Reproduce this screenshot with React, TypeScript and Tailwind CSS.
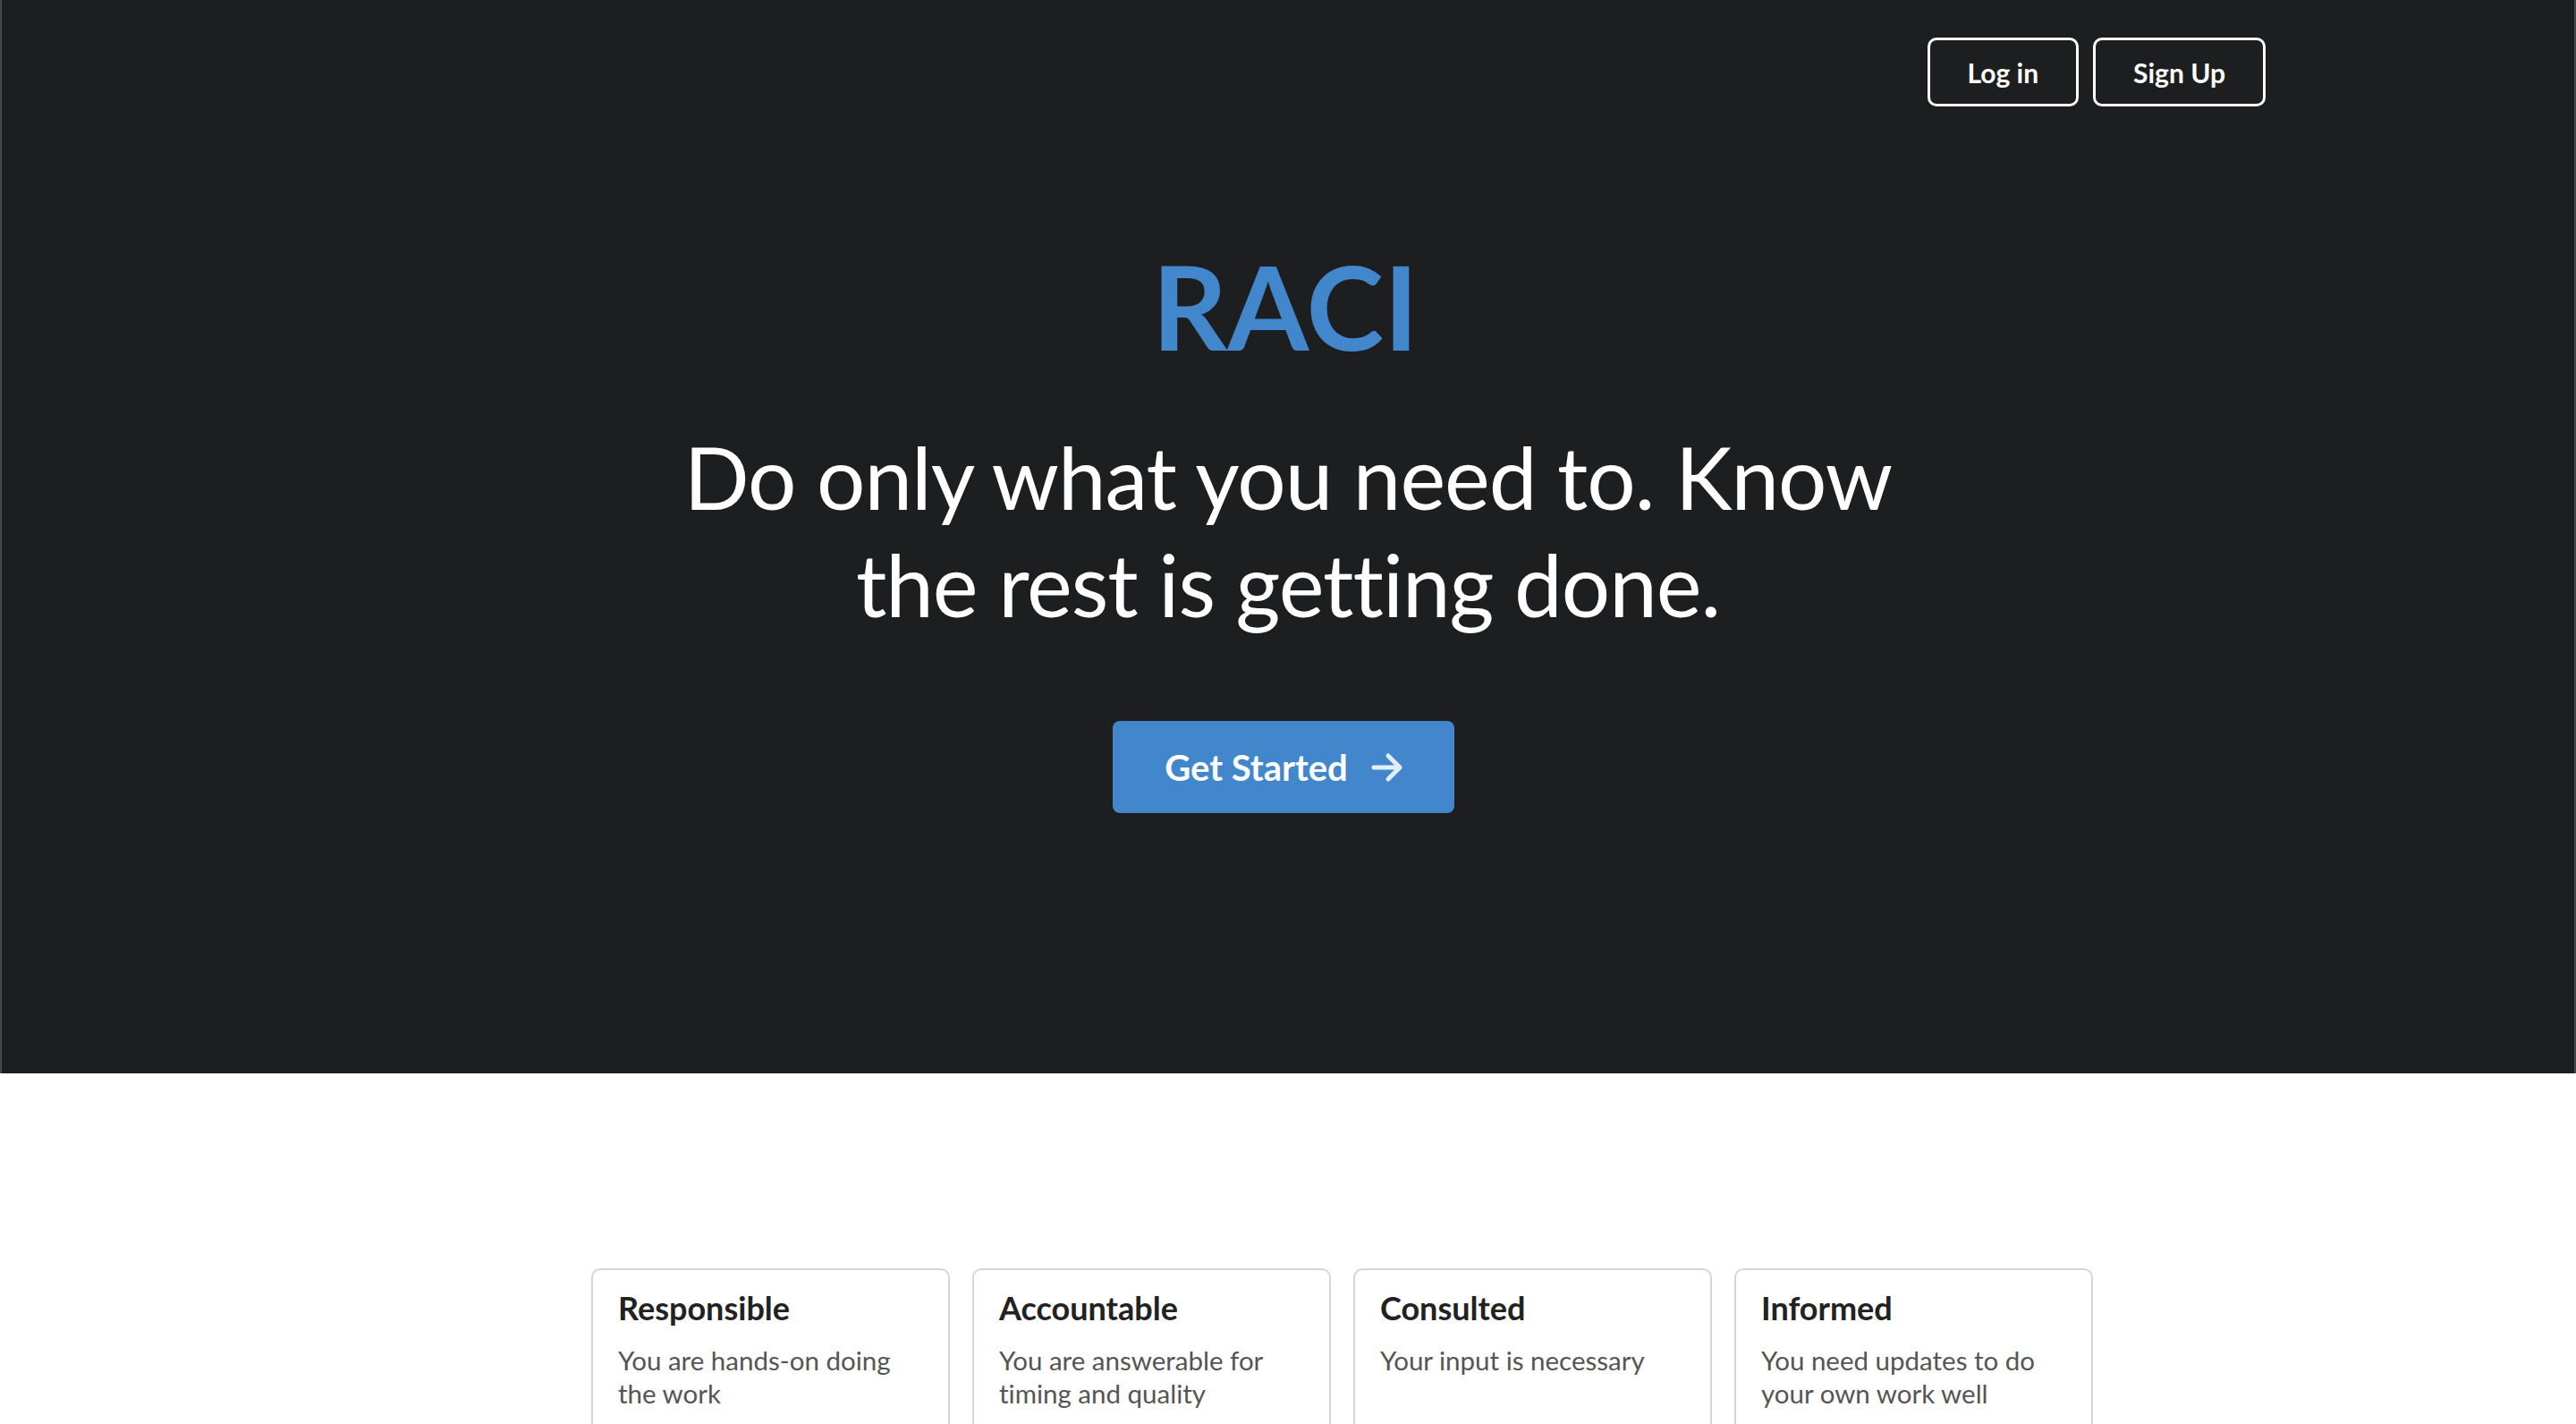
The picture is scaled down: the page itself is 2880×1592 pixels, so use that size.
import React from "react";

const cards = [
  { title: "Responsible", desc: ["You are hands-on doing", "the work"] },
  { title: "Accountable", desc: ["You are answerable for", "timing and quality"] },
  { title: "Consulted", desc: ["Your input is necessary"] },
  { title: "Informed", desc: ["You need updates to do", "your own work well"] },
];

export default function App() {
  return (
    <div className="min-h-[1592px] bg-white font-['Lato','Liberation_Sans',sans-serif] [font-variant-ligatures:none]">
      <section className="h-[1200px] bg-[#1d1e20] border-x-[2px] border-[#46474a] flex flex-col">
        <nav className="flex justify-end gap-[16px] pt-[42px] pr-[345px]">
          <button className="h-[77px] px-[42px] border-[3px] border-white rounded-[10px] text-white text-[30px] leading-[36px] font-bold">
            Log in
          </button>
          <button className="h-[77px] px-[42px] border-[3px] border-white rounded-[10px] text-white text-[30px] leading-[36px] font-bold">
            Sign Up
          </button>
        </nav>
        <div className="flex flex-col items-center pt-[157px]">
          <h1 className="text-[131px] leading-[131px] font-bold text-[#4287cb] mr-[6px]">RACI</h1>
          <p className="mt-[66px] text-center text-white text-[96px] leading-[120px] font-normal tracking-[-1px]">
            Do only what you need to. Know
            <br />
            the rest is getting done.
          </p>
          <button className="mt-[93px] mr-[11px] h-[103px] w-[382px] rounded-[8px] bg-[#4287cb] flex items-center justify-center gap-[26px] text-white text-[40px] leading-[48px] font-bold pl-[2px]">
            <span>Get Started</span>
            <svg width="36" height="34" viewBox="0 0 36 34" fill="none" className="text-white/85">
              <path d="M3 17H32M19 4L32 17L19 30" stroke="currentColor" strokeWidth="5" strokeLinecap="round" strokeLinejoin="round" />
            </svg>
          </button>
        </div>
      </section>
      <section className="pt-[218px] pl-[661px] flex gap-[25px]">
        {cards.map((c) => (
          <div
            key={c.title}
            className="w-[401px] h-[300px] border-2 border-[#d6d6d6] rounded-[10px] px-[28px] pt-[21px]"
          >
            <h2 className="text-[36px] leading-[42px] font-bold text-[#222222]">{c.title}</h2>
            <p className="mt-[19px] text-[29.5px] leading-[37px] text-[#555555]">
              {c.desc.map((l, i) => (
                <React.Fragment key={i}>
                  {l}
                  {i < c.desc.length - 1 && <br />}
                </React.Fragment>
              ))}
            </p>
          </div>
        ))}
      </section>
    </div>
  );
}
